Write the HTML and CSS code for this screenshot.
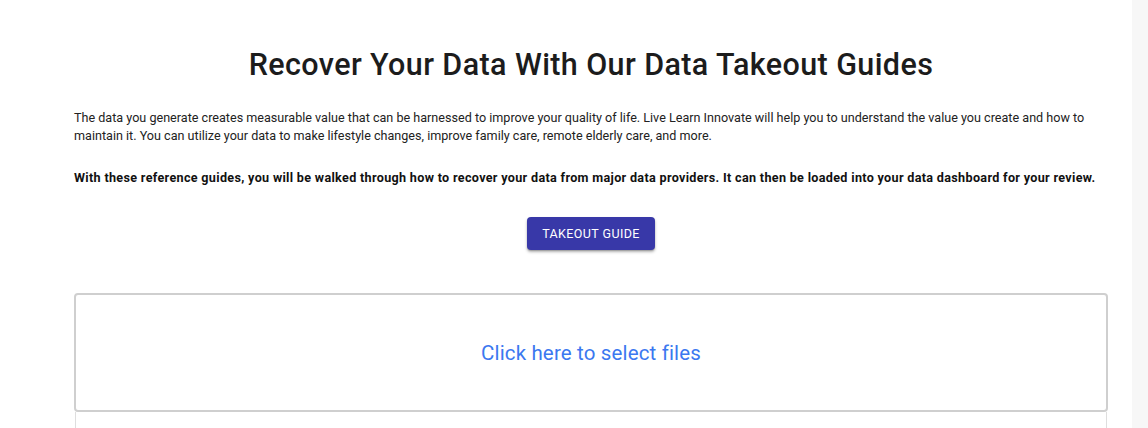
FILE: index.html
```html
<!DOCTYPE html>
<html lang="en">
<head>
<meta charset="utf-8">
<title>Data Takeout Guides</title>
<link rel="stylesheet" href="styles.css">
</head>
<body>
<div class="page">
  <main class="content">
    <h1 class="title">Recover Your Data With Our Data Takeout Guides</h1>
    <p class="intro">The data you generate creates measurable value that can be harnessed to improve your quality of life. Live Learn Innovate will help you to understand the value you create and how to maintain it. You can utilize your data to make lifestyle changes, improve family care, remote elderly care, and more.</p>
    <p class="intro strong">With these reference guides, you will be walked through how to recover your data from major data providers. It can then be loaded into your data dashboard for your review.</p>
    <div class="actions">
      <button class="btn" type="button">Takeout Guide</button>
    </div>
    <div class="dropzone">
      <span class="drop-link">Click here to select files</span>
    </div>
    <div class="filelist"></div>
  </main>
  <aside class="gutter"></aside>
</div>
</body>
</html>
```

FILE: styles.css
```css
html, body {
  margin: 0;
  padding: 0;
  height: 100%;
  overflow: hidden;
}
body {
  font-family: Roboto, "Liberation Sans", Arial, sans-serif;
  color: #1f1f1f;
  background: #ffffff;
}
.page {
  display: flex;
  height: 428px;
}
.content {
  width: 1034px;
  padding: 0 24px 0 74px;
  flex: none;
}
.gutter {
  flex: 1;
  background: #f7f7f7;
}
.title {
  margin: 0;
  padding-top: 46px;
  font-size: 30.5px;
  font-weight: 500;
  letter-spacing: 0.4px;
  line-height: 38px;
  text-align: center;
  color: #1c1c1c;
}
.intro {
  margin: 25px 0 0;
  font-size: 12.6px;
  line-height: 18px;
  color: #222;
}
.intro.strong {
  margin-top: 24px;
  font-weight: 700;
  letter-spacing: 0.32px;
  color: #111;
}
.actions {
  display: flex;
  justify-content: center;
  margin-top: 30px;
}
.btn {
  background: #3838a8;
  color: #fff;
  border: none;
  border-radius: 4px;
  height: 33px;
  width: 128px;
  padding: 0;
  font-family: Roboto, "Liberation Sans", Arial, sans-serif;
  font-size: 12.5px;
  font-weight: 400;
  letter-spacing: 0.4px;
  text-transform: uppercase;
  box-shadow: 0 2px 3px rgba(0,0,0,0.3), 0 1px 1px rgba(0,0,0,0.14);
}
.dropzone {
  margin-top: 43px;
  height: 115px;
  border: 2px solid #cfcfcf;
  border-radius: 4px;
  display: flex;
  align-items: center;
  justify-content: center;
}
.drop-link {
  color: #3b78f0;
  font-size: 20.5px;
  letter-spacing: 0.15px;
}
.filelist {
  margin: 0 1px;
  height: 20px;
  border-left: 1px solid #dedede;
  border-right: 1px solid #dedede;
}
```
